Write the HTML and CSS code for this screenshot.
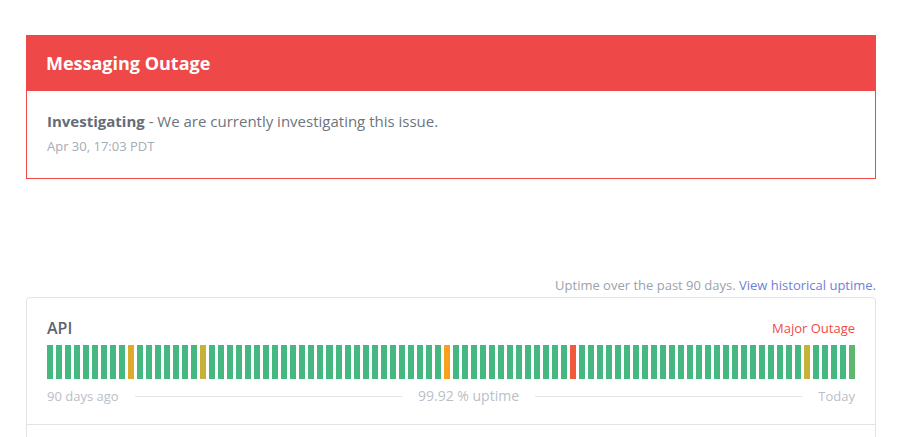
FILE: index.html
```html
<!DOCTYPE html>
<html lang="en">
<head>
<meta charset="utf-8">
<title>Status</title>
<link rel="stylesheet" href="styles.css">
</head>
<body>
<div class="page">
  <section class="incident">
    <div class="incident-head">Messaging Outage</div>
    <div class="incident-body">
      <p class="update"><strong>Investigating</strong> - We are currently investigating this issue.</p>
      <p class="time">Apr 30, 17:03 PDT</p>
    </div>
  </section>

  <p class="uptime-note">Uptime over the past 90 days. <a href="#">View historical uptime.</a></p>

  <section class="components">
    <div class="component">
      <div class="comp-top">
        <span class="comp-name">API</span>
        <span class="comp-status">Major Outage</span>
      </div>
      <div class="bars">
        <span class="bar"></span><span class="bar"></span><span class="bar"></span><span class="bar"></span><span class="bar"></span><span class="bar"></span><span class="bar"></span><span class="bar"></span><span class="bar"></span><span class="bar minor"></span>
        <span class="bar"></span><span class="bar"></span><span class="bar"></span><span class="bar"></span><span class="bar"></span><span class="bar"></span><span class="bar"></span><span class="bar olive"></span><span class="bar"></span><span class="bar"></span>
        <span class="bar"></span><span class="bar"></span><span class="bar"></span><span class="bar"></span><span class="bar"></span><span class="bar"></span><span class="bar"></span><span class="bar"></span><span class="bar"></span><span class="bar"></span>
        <span class="bar"></span><span class="bar"></span><span class="bar"></span><span class="bar"></span><span class="bar"></span><span class="bar"></span><span class="bar"></span><span class="bar"></span><span class="bar"></span><span class="bar"></span>
        <span class="bar"></span><span class="bar"></span><span class="bar"></span><span class="bar"></span><span class="bar partial"></span><span class="bar"></span><span class="bar"></span><span class="bar"></span><span class="bar"></span><span class="bar"></span>
        <span class="bar"></span><span class="bar"></span><span class="bar"></span><span class="bar"></span><span class="bar"></span><span class="bar"></span><span class="bar"></span><span class="bar"></span><span class="bar major"></span><span class="bar"></span>
        <span class="bar"></span><span class="bar"></span><span class="bar"></span><span class="bar"></span><span class="bar"></span><span class="bar"></span><span class="bar"></span><span class="bar"></span><span class="bar"></span><span class="bar"></span>
        <span class="bar"></span><span class="bar"></span><span class="bar"></span><span class="bar"></span><span class="bar"></span><span class="bar"></span><span class="bar"></span><span class="bar"></span><span class="bar"></span><span class="bar"></span>
        <span class="bar"></span><span class="bar"></span><span class="bar"></span><span class="bar"></span><span class="bar olive"></span><span class="bar"></span><span class="bar"></span><span class="bar"></span><span class="bar"></span><span class="bar today"></span>
      </div>
      <div class="legend">
        <span>90 days ago</span>
        <span class="rule"></span>
        <span class="pct">99.92 % uptime</span>
        <span class="rule"></span>
        <span>Today</span>
      </div>
    </div>
    <div class="component next"></div>
  </section>
</div>
</body>
</html>
```

FILE: styles.css
```css
* { box-sizing: border-box; }
html, body { margin: 0; padding: 0; background: #fff; }
body {
  font-family: "Open Sans", "Liberation Sans", sans-serif;
  color: #333;
}
.page {
  width: 850px;
  margin-left: 26px;
  padding-top: 35px;
}
.incident {
  border: 1px solid #ef4848;
}
.incident-head {
  background: #ef4848;
  color: #fff;
  font-weight: 700;
  font-size: 18px;
  height: 56px;
  display: flex;
  align-items: center;
  padding: 0 20px;
  margin: -1px -1px 0;
}
.incident-body {
  padding: 20px 20px 23px;
}
.update {
  margin: 0;
  font-size: 15px;
  line-height: 20px;
  color: #6d747e;
}
.update strong { color: #656c76; font-weight: 700; }
.time {
  margin: 6px 0 0;
  font-size: 13px;
  line-height: 18px;
  color: #a6acb4;
}
.uptime-note {
  margin: 98px 0 0;
  text-align: right;
  font-size: 13px;
  line-height: 16px;
  color: #9aa2ad;
}
.uptime-note a { color: #6f7fd5; text-decoration: none; }
.components {
  margin-top: 4px;
  border: 1px solid #e3e3e3;
  border-radius: 4px;
  overflow: hidden;
}
.component {
  padding: 20px 20px 0;
  border-bottom: 1px solid #e3e3e3;
  height: 127px;
}
.component.next { border-bottom: 0; height: 20px; }
.comp-top {
  display: flex;
  justify-content: space-between;
  align-items: center;
  height: 20px;
}
.comp-name {
  font-size: 16px;
  font-weight: 600;
  color: #5b6470;
}
.comp-status {
  font-size: 13px;
  color: #ef4a4a;
}
.bars {
  margin-top: 7px;
  display: flex;
  gap: 3px;
  height: 34px;
}
.bar { flex: 1; background: #45b882; }
.bar.minor { background: #ddaa2e; }
.bar.olive { background: #c6b23a; }
.bar.partial { background: #f9a11f; }
.bar.major { background: #f2583a; }
.bar.today { background: #5fb76d; }
.legend {
  display: flex;
  align-items: center;
  gap: 16px;
  margin-top: 8px;
  font-size: 13px;
  line-height: 18px;
  color: #b9c0c7;
}
.legend .pct { font-size: 14px; }
.legend .rule {
  flex: 1;
  height: 1px;
  background: #dfe5e6;
}
```
